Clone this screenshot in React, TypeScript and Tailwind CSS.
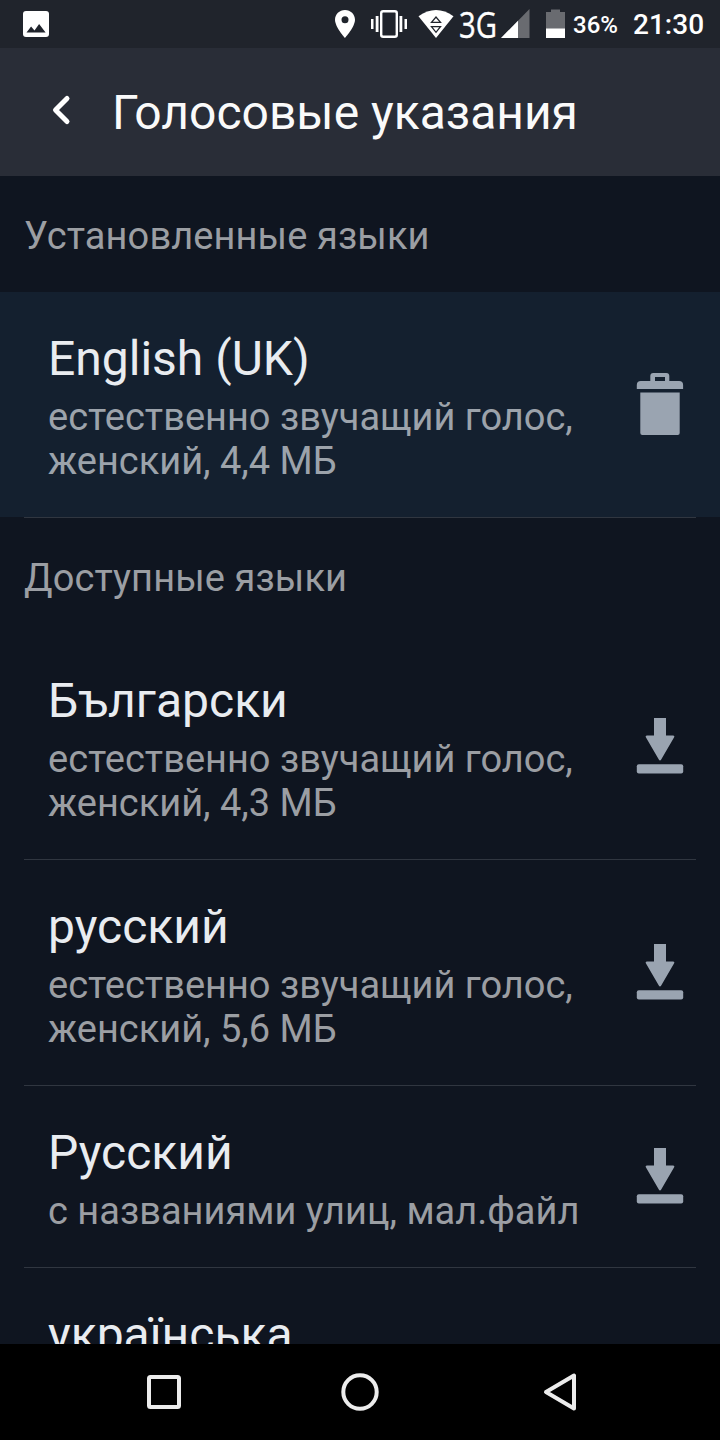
import React from 'react';

interface Voice {
  name: string;
  details: string[];
}

const installed: Voice[] = [
  { name: 'English (UK)', details: ['естественно звучащий голос,', 'женский, 4,4 МБ'] },
];

const available: Voice[] = [
  { name: 'Български', details: ['естественно звучащий голос,', 'женский, 4,3 МБ'] },
  { name: 'русский', details: ['естественно звучащий голос,', 'женский, 5,6 МБ'] },
  { name: 'Русский', details: ['с названиями улиц, мал.файл'] },
];

const TrashIcon = () => (
  <svg className="mb-[7px]" width="48" height="64" viewBox="0 0 48 64" fill="#9aa4b1">
    <path fillRule="evenodd" d="M.8 17v-4q0-4 4-4h9.500V4q0-3 3-3h13q3 0 3 3v5h9.800q4 0 4 4v4zM19 9h10V5H19z" />
    <path d="M4.300 20.500h39.400V61q0 2-2 2H6.300q-2 0-2-2z" />
  </svg>
);

const DownloadIcon = () => (
  <svg className="mb-[7px]" width="48" height="58" viewBox="0 0 48 58" fill="#9aa4b1">
    <path d="M18 1h12v17.500h7q2 0 1 2L25.200 42.500q-1.200 2-2.400 0L10 20.500q-1-2 1-2h7z" />
    <rect x=".8" y="47.300" width="46.400" height="9.200" rx="2" />
  </svg>
);

const StatusBar = () => (
  <div className="flex h-12 shrink-0 items-center justify-between bg-[#20242c] text-white">
    <svg className="ml-[23px]" width="26" height="48" viewBox="23 0 26 48">
      <rect x="23" y="11" width="26" height="26" rx="3" fill="#fff" />
      <path d="M26.500 32.500l4.600-6 3.400 4 4.600-6.500 6.500 8.500z" fill="#20242c" />
    </svg>
    <div className="flex items-center">
      <svg width="242" height="48" viewBox="330 0 242 48" fill="#fff">
        {/* location */}
        <path
          fillRule="evenodd"
          d="M345 10c-5.600 0-10 4.300-10 9.800C335 27 345 38 345 38s10-11 10-18.200c0-5.500-4.400-9.800-10-9.800zm0 6.300a3.500 3.500 0 1 1 0 7 3.500 3.500 0 0 1 0-7z"
        />
        {/* vibration */}
        <rect x="381.200" y="11.200" width="15.600" height="25.600" rx="2" fill="none" stroke="#fff" strokeWidth="2.400" />
        <path d="M371 19h2.500v10H371zM375.700 16h2.800v16h-2.800zM399.500 16h2.800v16h-2.800zM404.500 19h2.500v10h-2.500z" />
        {/* wifi */}
        <path d="M418.500 16.300Q436 3.800 453.500 16.300L436 38z" />
        <path
          d="M431.500 22.300h9L436 17zM431.500 26.700h9L436 32.300z"
          fill="#fff"
          stroke="#20242c"
          strokeWidth="1.300"
        />
        <text
          x="459"
          y="37.500"
          fontSize="36"
          textLength="38"
          lengthAdjust="spacingAndGlyphs"
          className="font-['Open_Sans',sans-serif]"
          stroke="#fff"
          strokeWidth="0.400"
        >
          3G
        </text>
        {/* signal */}
        <path d="M529.500 9v29H501z" fill="#696b70" />
        <path d="M518 20.700V38h-17z" />
        {/* battery */}
        <path d="M546 12h5V9.500h9V12h5v26h-19z" fill="#696b70" />
        <path d="M546 28.500h19V38h-19z" />
      </svg>
      <span className="ml-px w-[60px] pt-0.5 text-2xl font-medium">36%</span>
      <span className="w-[87px] pt-0.5 text-[28px] font-medium">21:30</span>
    </div>
  </div>
);

const Header = () => (
  <div className="flex h-32 shrink-0 items-center bg-[#292d37]">
    <svg className="ml-[50px]" width="62" height="128" viewBox="50 48 62 128">
      <path d="M67 98.500L55.500 110 67 121.500" fill="none" stroke="#fff" strokeWidth="5" strokeLinecap="round" strokeLinejoin="round" />
    </svg>
    <h1 className="pt-0.5 text-[48px] leading-[56px] text-[#fafafa]">Голосовые указания</h1>
  </div>
);

const SectionTitle: React.FC<{ children: React.ReactNode }> = ({ children }) => (
  <h2 className="flex h-[116px] shrink-0 items-center px-6 pt-1 text-[38px] leading-[44px] tracking-[0.1px] text-[#9b9ea3]">
    {children}
  </h2>
);

const VoiceRow: React.FC<{ voice: Voice; active?: boolean }> = ({ voice, active }) => (
  <div className="shrink-0">
    <div className={`flex items-center justify-between pl-12 pr-9 pt-[39px] pb-[34px] ${active ? 'bg-[#14202f]' : ''}`}>
      <div>
        <div className="text-[48px] leading-[56px] text-[#e9ecf0]">{voice.name}</div>
        <div className={`mt-2 text-[38px] leading-[44px] ${active ? 'text-[#9ca3ab]' : 'text-[#9b9ea3]'}`}>
          {voice.details.map((line) => (
            <div key={line} className="whitespace-nowrap">{line}</div>
          ))}
        </div>
      </div>
      {active ? <TrashIcon /> : <DownloadIcon />}
    </div>
    <div className="mx-6 h-px bg-[#303640]" />
  </div>
);

const NavBar = () => (
  <div className="flex h-24 shrink-0 items-center justify-center bg-black">
    <svg width="440" height="96" viewBox="140 1344 440 96" fill="none" stroke="#ececec" strokeWidth="4">
      <rect x="149" y="1377" width="30" height="30" rx="1.500" />
      <circle cx="360" cy="1392" r="16.700" />
      <path d="M574 1375.500v33L546 1392z" strokeLinejoin="round" />
    </svg>
  </div>
);

const App: React.FC = () => {
  return (
    <div className="flex h-[1440px] w-[720px] flex-col overflow-hidden bg-[#0f1520] font-['Roboto',sans-serif]">
      <StatusBar />
      <Header />
      <div className="flex min-h-0 flex-1 flex-col overflow-hidden">
        <SectionTitle>Установленные языки</SectionTitle>
        {installed.map((voice) => (
          <VoiceRow key={voice.name} voice={voice} active />
        ))}
        <SectionTitle>Доступные языки</SectionTitle>
        {available.map((voice) => (
          <VoiceRow key={voice.name} voice={voice} />
        ))}
        <div className="shrink-0 pl-12 pt-[39px] text-[48px] leading-[56px] text-[#e9ecf0]">українська</div>
      </div>
      <NavBar />
    </div>
  );
};

export default App;
